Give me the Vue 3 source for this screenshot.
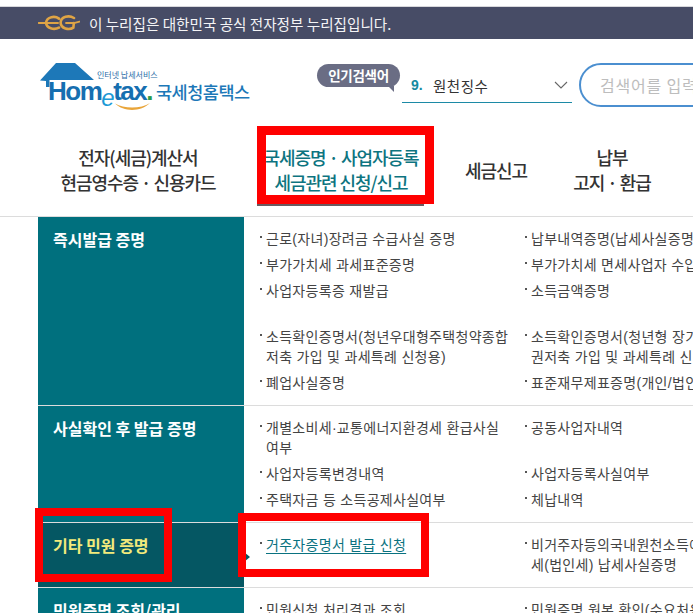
<script setup>
const navItems = [
  { lines: ['전자(세금)계산서', '현금영수증 · 신용카드'] },
  { lines: ['국세증명 · 사업자등록', '세금관련 신청/신고'], active: true },
  { lines: ['세금신고'] },
  { lines: ['납부', '고지 · 환급'] }
]

const sections = [
  {
    title: '즉시발급 증명',
    rows: [
      ['근로(자녀)장려금 수급사실 증명', '납부내역증명(납세사실증명)'],
      ['부가가치세 과세표준증명', '부가가치세 면세사업자 수입금액증명'],
      ['사업자등록증 재발급', '소득금액증명', 'gap'],
      ['소득확인증명서(청년우대형주택청약종합저축 가입 및 과세특례 신청용)', '소득확인증명서(청년형 장기집합투자증권저축 가입 및 과세특례 신청용)'],
      ['폐업사실증명', '표준재무제표증명(개인/법인)']
    ]
  },
  {
    title: '사실확인 후 발급 증명',
    rows: [
      ['개별소비세·교통에너지환경세 환급사실 여부', '공동사업자내역'],
      ['사업자등록변경내역', '사업자등록사실여부'],
      ['주택자금 등 소득공제사실여부', '체납내역']
    ]
  },
  {
    title: '기타 민원 증명',
    selected: true,
    rows: [['거주자증명서 발급 신청', '비거주자등의국내원천소득에 대한 소득세(법인세) 납세사실증명']]
  },
  {
    title: '민원증명 조회/관리',
    rows: [['민원신청 처리결과 조회', '민원증명 원본 확인(수요처용)']]
  }
]
</script>

<template>
  <div class="page">
    <div class="notice">
      <svg class="eg" width="42" height="16" viewBox="0 0 42 16" fill="none" stroke="#dfa445" stroke-linecap="round">
        <path d="M0.5 8 H16" stroke-width="1.8" />
        <path d="M21 3.6 C17 0.6 9 1.4 8 7.6 C8.4 13.4 16 15.4 21 12.6" stroke-width="2.6" />
        <path d="M10 8 H20" stroke-width="2" />
        <path d="M36 3 C31 0 23 1.4 22.6 7.6 C22.8 13.6 31 15.4 35.4 12.6 L35.8 8" stroke-width="2.6" />
        <path d="M28 8 H36 L41.5 6.6" stroke-width="1.8" />
      </svg>
      <span>이 누리집은 대한민국 공식 전자정부 누리집입니다.</span>
    </div>

    <header class="header">
      <div class="logo">
        <svg class="roof" width="56" height="28" viewBox="0 0 56 28">
          <path d="M0 17.5 L16 0 H35 L54 17 H15 L9.5 17 V24 H6 V18 Z" fill="#1d78b8" />
        </svg>
        <span class="logo-sub">인터넷 납세서비스</span>
        <span class="logo-word">Hom<em>e</em>tax<i>.</i></span>
        <svg class="smile" width="36" height="9" viewBox="0 0 36 9">
          <path d="M0 0.5 C9 6 26 6 35 0 C26 9 9 9.4 0 0.5 Z" fill="#e9a53a" />
        </svg>
        <span class="logo-name">국세청홈택스</span>
      </div>

      <div class="popular">
        <span class="badge">인기검색어</span>
        <div class="keyword">
          <b>9.</b>
          <span>원천징수</span>
          <svg width="14" height="8" viewBox="0 0 14 8" fill="none">
            <path d="M1 1 L7 7 L13 1" stroke="#666" stroke-width="1.1" />
          </svg>
        </div>
      </div>

      <div class="search">검색어를 입력하세요</div>
    </header>

    <nav class="nav">
      <a v-for="item in navItems" :key="item.lines[0]" class="nav-item" :class="{ active: item.active }">
        <span v-for="line in item.lines" :key="line">{{ line }}</span>
      </a>
    </nav>

    <main class="menu">
      <section v-for="sec in sections" :key="sec.title" class="menu-group" :class="{ selected: sec.selected }">
        <h3 class="group-title">{{ sec.title }}</h3>
        <div class="group-list">
          <div v-for="row in sec.rows" :key="row[0]" class="list-row" :class="{ gap: row[2] }">
            <a class="list-item" :class="{ current: sec.selected }"><span>{{ row[0] }}</span></a>
            <a class="list-item"><span>{{ row[1] }}</span></a>
          </div>
        </div>
      </section>
    </main>

    <!-- red marks drawn over the capture -->
    <div class="mark mark-nav"></div>
    <div class="mark mark-title"></div>
    <div class="mark mark-link"></div>
  </div>
</template>

<style>
html,
body {
  margin: 0;
  background: #fff;
  overflow: hidden;
}
</style>

<style scoped>
.page {
  position: relative;
  width: 693px;
  height: 613px;
  overflow: hidden;
  padding-top: 6px;
  box-sizing: border-box;
  font-family: "Noto Sans CJK KR", "Noto Sans", sans-serif;
  color: #333;
  background: #fff;
}

.notice {
  display: flex;
  align-items: center;
  gap: 9px;
  height: 33px;
  padding-left: 38px;
  box-sizing: border-box;
  border-top: 1px solid #d8d8dc;
  background: #474c66;
  color: #f4f4f6;
  font-size: 14.6px;
}

.header {
  display: flex;
  height: 81px;
  padding-left: 40px;
}

.logo {
  position: relative;
  flex: none;
  width: 277px;
  height: 81px;
}

.roof {
  position: absolute;
  left: 0;
  top: 24px;
}

.logo-sub {
  position: absolute;
  left: 57px;
  top: 30px;
  font-size: 8px;
  line-height: 12px;
  letter-spacing: 0;
  color: #2b6ea8;
}

.logo-word {
  position: absolute;
  left: 8px;
  top: 37px;
  font-family: "Liberation Sans", sans-serif;
  font-size: 26px;
  line-height: 30px;
  font-weight: 700;
  letter-spacing: -1.5px;
  color: #166fb0;
}

.logo-word em {
  position: relative;
  top: 6px;
  font-size: 24px;
  font-weight: 400;
  color: #1d9ad6;
}

.logo-word i {
  font-style: normal;
  color: #2c9a48;
}

.smile {
  position: absolute;
  left: 75px;
  top: 64px;
}

.logo-name {
  position: absolute;
  left: 116px;
  top: 41px;
  font-size: 17.5px;
  line-height: 24px;
  font-weight: 500;
  letter-spacing: -0.5px;
  color: #1d78b8;
  white-space: nowrap;
}

.popular {
  position: relative;
  flex: none;
  width: 262px;
  height: 81px;
}

.badge {
  position: absolute;
  left: 0;
  top: 25px;
  width: 83px;
  height: 23px;
  border-radius: 12px;
  background: #6a6d84;
  color: #fff;
  font-size: 13.5px;
  font-weight: 700;
  line-height: 23px;
  text-align: center;
  letter-spacing: -0.3px;
}

.badge::after {
  content: "";
  position: absolute;
  right: 6px;
  bottom: -5px;
  border-top: 6px solid #6a6d84;
  border-left: 6px solid transparent;
}

.keyword {
  position: absolute;
  left: 85px;
  top: 29px;
  display: flex;
  align-items: center;
  width: 170px;
  height: 35px;
  padding: 0 4px 0 9px;
  box-sizing: border-box;
  border-bottom: 1px solid #1c8aa6;
  font-size: 14.5px;
  color: #333;
}

.keyword b {
  width: 22px;
  font-family: "Liberation Sans", sans-serif;
  font-size: 14px;
  color: #158aa0;
}

.keyword span {
  flex: 1;
  letter-spacing: 0.5px;
}

.search {
  flex: none;
  width: 220px;
  height: 44px;
  margin-top: 24px;
  padding-left: 19px;
  box-sizing: border-box;
  border: 2px solid #4b8fd0;
  border-radius: 22px;
  color: #bdbdbd;
  font-size: 16px;
  line-height: 40px;
  letter-spacing: 0.8px;
  white-space: nowrap;
  overflow: hidden;
}

.nav {
  display: grid;
  grid-template-columns: 198px 208px 102px 130px;
  height: 97px;
  padding-left: 39px;
  border-bottom: 1px solid #dcdcdc;
  box-sizing: border-box;
}

.nav-item {
  display: flex;
  flex-direction: column;
  align-items: center;
  justify-content: center;
  padding-top: 4px;
  font-size: 18px;
  font-weight: 500;
  line-height: 25px;
  letter-spacing: -1.05px;
  color: #333;
  white-space: nowrap;
}

.nav-item.active {
  color: #0d7480;
}

.menu {
  margin-left: 38px;
}

.menu-group {
  display: flex;
  border-bottom: 1px solid #dcdcdc;
}

.group-title {
  flex: none;
  width: 206px;
  margin: 0;
  padding: 12px 0 0 15px;
  box-sizing: border-box;
  background: #00707e;
  color: #fff;
  font-size: 16px;
  line-height: 20px;
  font-weight: 700;
}

.selected {
  position: relative;
}

.selected .group-title {
  background: #055763;
  color: #f2ea7c;
}

.selected::after {
  content: "";
  position: absolute;
  left: 206px;
  top: 29px;
  border-left: 6px solid #055763;
  border-top: 5px solid transparent;
  border-bottom: 5px solid transparent;
}

.group-list {
  flex: none;
  width: 532px;
  padding: 12px 0 6px 14px;
}

.list-row {
  display: grid;
  grid-template-columns: 265px 265px;
  margin-bottom: 6px;
}

.list-row.gap {
  margin-bottom: 26px;
}

.list-item {
  position: relative;
  padding-left: 8px;
  padding-right: 8px;
  font-family: "Liberation Sans", "Noto Sans CJK KR", sans-serif;
  font-size: 14px;
  line-height: 20px;
  letter-spacing: 0.3px;
  color: #444;
}

.list-item + .list-item {
  padding-right: 12px;
}

.list-item::before {
  content: "";
  position: absolute;
  left: 2px;
  top: 7px;
  width: 2px;
  height: 2px;
  background: #555;
}

.list-item.current:first-child span {
  color: #0a7280;
  text-decoration: underline;
  text-underline-offset: 3px;
}

.mark {
  position: absolute;
  box-sizing: border-box;
  border: 8px solid #ff0000;
}

.mark-nav {
  left: 257px;
  top: 126px;
  width: 177px;
  height: 78px;
  border-width: 9px;
}

.mark-nav::after {
  content: "";
  position: absolute;
  left: -9px;
  right: 1px;
  bottom: -11px;
  height: 2px;
  background: #6b5a60;
}

.mark-title {
  left: 35px;
  top: 508px;
  width: 137px;
  height: 74px;
}

.mark-link {
  left: 238px;
  top: 513px;
  width: 191px;
  height: 64px;
}
</style>
